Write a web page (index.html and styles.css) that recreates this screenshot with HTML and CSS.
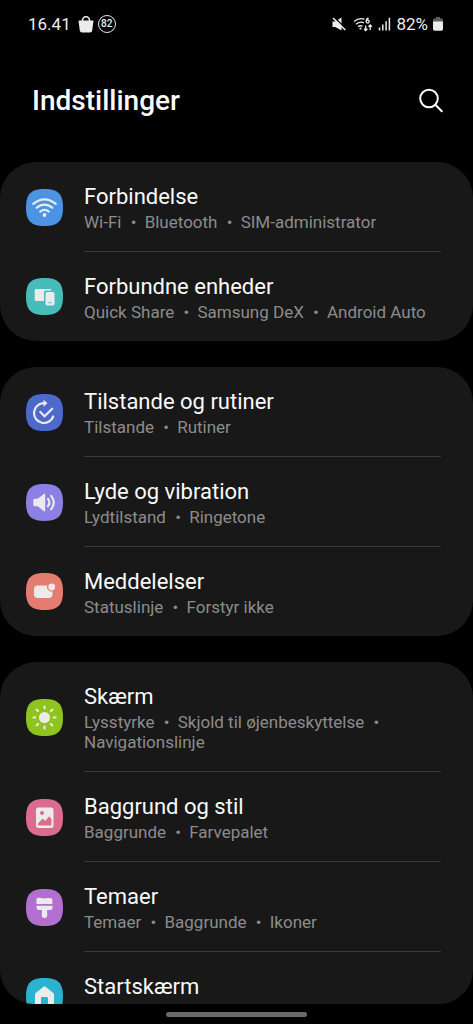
FILE: index.html
```html
<!DOCTYPE html>
<html lang="da">
<head>
<meta charset="utf-8">
<meta name="viewport" content="width=device-width, initial-scale=1">
<title>Indstillinger</title>
<link rel="stylesheet" href="styles.css">
</head>
<body>
<div class="screen">
  <div class="status">
    <div class="status-left">
      <span class="clock">16.41</span>
      <svg class="bag" viewBox="0 0 16 17" width="16" height="17" aria-hidden="true"><path d="M4.500 6V4.200a3.400 3.400 0 0 1 7 0V6" fill="none" stroke="#ececec" stroke-width="1.600"/><path d="M1.300 4.500h13.400q.8 0 .7.800l-1.200 9.300q-.3 2-2.200 2H4q-1.900 0-2.200-2L.6 5.300q-.1-.8.7-.8z" fill="#ececec"/></svg>
      <span class="level">82</span>
    </div>
    <div class="status-right">
      <svg viewBox="0 0 14 14" width="14" height="14" aria-hidden="true"><path d="M.5 4.500h2.800L9.500.5v13L3.300 10H.5z" fill="#ececec"/><path d="M2.300.300l12 12" stroke="#000" stroke-width="1.500"/><path d="M1 1l12.300 12" stroke="#ececec" stroke-width="1.600"/></svg>
      <svg class="net" viewBox="0 0 20 15" width="20" height="15" aria-hidden="true"><g fill="none" stroke="#ececec" stroke-width="1.300"><path d="M1 4.500Q6 .2 11.500 2.200M3 7.300Q7 4 11 5.800M5 9.700q2.300-1.700 4.600-.4"/><path d="M15.500.8q-2.500 1.300-2.200 3.400"/><circle cx="14.700" cy="4.500" r="1.500"/><path d="M12.700 8.500v5M11 11.800l1.700 1.700 1.700-1.700M17.200 13V8M15.500 9.700L17.200 8l1.700 1.700"/></g><circle cx="7.500" cy="11.500" r="1.100" fill="#ececec"/></svg>
      <svg viewBox="0 0 13 14" width="13" height="14" aria-hidden="true"><path d="M1.500 13.500v-3M4.800 13.500v-6M8.100 13.500V4.200M11.400 13.500V.8" stroke="#ececec" stroke-width="1.500"/></svg>
      <span class="percent">82%</span>
      <svg viewBox="0 0 10 14" width="10" height="14" aria-hidden="true"><path d="M3 0h4v1.500h1.500q1.500 0 1.500 1.500v2H0V3q0-1.500 1.500-1.500H3z" fill="#606060"/><path d="M0 4.500h10V12q0 1.700-1.700 1.700H1.700Q0 13.700 0 12z" fill="#ececec"/></svg>
    </div>
  </div>

  <header class="header">
    <h1>Indstillinger</h1>
    <button class="search" type="button" aria-label="Søg">
      <svg viewBox="0 0 26 26" width="26" height="26" aria-hidden="true"><g fill="none" stroke="#fafafa" stroke-width="2"><circle cx="11" cy="10.500" r="8.800"/><path d="M17.300 16.800l6.500 6.500" stroke-linecap="round"/></g></svg>
    </button>
  </header>

  <main class="list">
    <section class="card">
      <a class="row" href="#forbindelse">
        <svg class="icon blue" viewBox="0 0 37 37"><path class="tile" d="M18.500 0C32 0 37 5 37 18.500S32 37 18.500 37 0 32 0 18.500 5 0 18.500 0z"/><g class="line"><path d="M7.200 14.800Q18.500 5.800 29.800 14.800M10.700 18.700q7.800-6.200 15.600 0M14.200 22.600q4.300-3.500 8.600 0"/></g><circle class="fill" cx="18.500" cy="26" r="1.900"/></svg>
        <span class="body"><span class="name">Forbindelse</span><span class="detail">Wi-Fi <i>•</i> Bluetooth <i>•</i> SIM-administrator</span></span>
      </a>
      <a class="row" href="#enheder">
        <svg class="icon teal" viewBox="0 0 37 37"><path class="tile" d="M18.500 0C32 0 37 5 37 18.500S32 37 18.500 37 0 32 0 18.500 5 0 18.500 0z"/><path class="fill" d="M10 11h14q1.300 0 1.300 1.500H20q-2 0-2 2V23h-8q-1.300 0-1.300-1.300v-9.400Q8.700 11 10 11z"/><rect class="fill" x="19.500" y="14" width="9" height="13.500" rx="1.700"/><path class="cut" d="M22.300 24.800h3.400" stroke-width="1"/></svg>
        <span class="body"><span class="name">Forbundne enheder</span><span class="detail">Quick Share <i>•</i> Samsung DeX <i>•</i> Android Auto</span></span>
      </a>
    </section>

    <section class="card">
      <a class="row" href="#tilstande">
        <svg class="icon indigo" viewBox="0 0 37 37"><path class="tile" d="M18.500 0C32 0 37 5 37 18.500S32 37 18.500 37 0 32 0 18.500 5 0 18.500 0z"/><g class="line"><path d="M19 9.200h-1.700A9.900 9.900 0 1 0 27.200 22.500"/><path d="M14.300 18l4.300 4.300 7.600-7.600" stroke-linecap="round"/></g><path class="fill" d="M17.500 5.800l4 3.400-4 3.600z"/></svg>
        <span class="body"><span class="name">Tilstande og rutiner</span><span class="detail">Tilstande <i>•</i> Rutiner</span></span>
      </a>
      <a class="row" href="#lyde">
        <svg class="icon violet" viewBox="0 0 37 37"><path class="tile" d="M18.500 0C32 0 37 5 37 18.500S32 37 18.500 37 0 32 0 18.500 5 0 18.500 0z"/><path class="fill" d="M8.700 14.700h3l6-4.800q1.500-1 1.500.8v15.600q0 1.800-1.500.8l-6-4.800h-3q-1.400 0-1.400-1.400v-4.800q0-1.400 1.400-1.400z"/><path class="line" d="M22 14.800q2.800 3.700 0 7.400M25.200 11.800q5.200 6.700 0 13.400"/></svg>
        <span class="body"><span class="name">Lyde og vibration</span><span class="detail">Lydtilstand <i>•</i> Ringetone</span></span>
      </a>
      <a class="row" href="#meddelelser">
        <svg class="icon coral" viewBox="0 0 37 37"><path class="tile" d="M18.500 0C32 0 37 5 37 18.500S32 37 18.500 37 0 32 0 18.500 5 0 18.500 0z"/><rect class="fill" x="8" y="12.500" width="18.500" height="12.500" rx="3.700"/><circle class="cut tilefill" cx="25.700" cy="14" r="4" stroke-width="1.500"/><circle class="fill" cx="25.700" cy="14" r="3.400"/></svg>
        <span class="body"><span class="name">Meddelelser</span><span class="detail">Statuslinje <i>•</i> Forstyr ikke</span></span>
      </a>
    </section>

    <section class="card">
      <a class="row" href="#skaerm">
        <svg class="icon green" viewBox="0 0 37 37"><path class="tile" d="M18.500 0C32 0 37 5 37 18.500S32 37 18.500 37 0 32 0 18.500 5 0 18.500 0z"/><circle class="fill" cx="18.500" cy="18.500" r="5.500"/><g class="line"><path d="M18.500 7.500v1.800M18.500 27.700v1.800M7.500 18.500h1.800M27.700 18.500h1.800M10.700 10.700l1.300 1.300M25 25l1.300 1.300M10.700 26.300L12 25M25 12l1.300-1.300"/></g></svg>
        <span class="body"><span class="name">Skærm</span><span class="detail">Lysstyrke <i>•</i> Skjold til øjenbeskyttelse <i>•</i> Navigationslinje</span></span>
      </a>
      <a class="row" href="#baggrund">
        <svg class="icon pink" viewBox="0 0 37 37"><path class="tile" d="M18.500 0C32 0 37 5 37 18.500S32 37 18.500 37 0 32 0 18.500 5 0 18.500 0z"/><rect class="fill" x="10" y="8.500" width="17.500" height="20.500" rx="2.500"/><circle class="tilefill" cx="16" cy="14" r="2"/><path class="tilefill" d="M12 24.500l4-4.300q.8-.7 1.600.1l1.700 1.700 3.200-4q.8-.9 1.500.1l1.500 2.400v4.700q0 1.300-1.300 1.300H13.300q-1.300 0-1.300-1.300z"/></svg>
        <span class="body"><span class="name">Baggrund og stil</span><span class="detail">Baggrunde <i>•</i> Farvepalet</span></span>
      </a>
      <a class="row" href="#temaer">
        <svg class="icon purple" viewBox="0 0 37 37"><path class="tile" d="M18.500 0C32 0 37 5 37 18.500S32 37 18.500 37 0 32 0 18.500 5 0 18.500 0z"/><path class="fill" d="M10.500 9.300q2.500-.8 5-.2 3 .9 6 0 2.500-.6 4.800.7V15H10.500zM10.500 16.700h16v2q0 2.300-2.300 2.300h-2.500q-.8 0-.7 1l.3 3.500q.2 3.500-2.800 3.500t-2.800-3.500l.3-3.500q.1-1-.7-1h-2.500q-2.300 0-2.300-2.300z"/></svg>
        <span class="body"><span class="name">Temaer</span><span class="detail">Temaer <i>•</i> Baggrunde <i>•</i> Ikoner</span></span>
      </a>
      <a class="row" href="#startskaerm">
        <svg class="icon cyan" viewBox="0 0 37 37"><path class="tile" d="M18.500 0C32 0 37 5 37 18.500S32 37 18.500 37 0 32 0 18.500 5 0 18.500 0z"/><path class="fill" d="M17.500 8.700q1-.8 2 0l7.800 6.200q.7.600.7 1.500v9q0 2-2 2h-4v-7q0-1.300-1.300-1.300h-4.400q-1.300 0-1.300 1.300v7H11q-2 0-2-2v-9q0-.9.700-1.500z"/></svg>
        <span class="body"><span class="name">Startskærm</span></span>
      </a>
    </section>
  </main>

  <div class="gesture"><span class="handle"></span></div>
</div>
</body>
</html>
```

FILE: styles.css
```css
* { box-sizing: border-box; }

body {
  margin: 0;
  background: #000;
  color: #fafafa;
  font-family: Roboto, "Noto Sans", sans-serif;
}

.screen {
  display: flex;
  flex-direction: column;
  height: 100vh;
}

.status {
  display: flex;
  justify-content: space-between;
  align-items: center;
  padding: 12px 30px 0 28px;
  color: #ececec;
  font-size: 17px;
  line-height: 24px;
}

.status-left,
.status-right {
  display: flex;
  align-items: center;
}

.status-left { gap: 4px; }
.status-right { gap: 5px; }
.clock { margin-right: 3px; }
.net { margin-left: 2px; }

.level {
  display: grid;
  place-items: center;
  width: 18px;
  height: 18px;
  border: 1px solid #ececec;
  border-radius: 50%;
  font-size: 10px;
  font-weight: 500;
  line-height: 10px;
}

.header {
  display: flex;
  justify-content: space-between;
  align-items: center;
  padding: 40px 29px 37px 32px;
}

h1 {
  margin: 0;
  font-size: 28px;
  font-weight: 500;
  line-height: 49px;
}

.search {
  display: flex;
  padding: 0;
  border: 0;
  background: none;
}

.list {
  display: flex;
  flex: 1;
  flex-direction: column;
  gap: 26px;
  min-height: 0;
  overflow-y: auto;
  scrollbar-width: none;
  border-radius: 0 0 34px 34px;
}

.card {
  flex-shrink: 0;
  padding: 0 32px 0 26px;
  border-radius: 36px;
  background: #181818;
}

.row {
  display: flex;
  align-items: center;
  gap: 21px;
  color: inherit;
  text-decoration: none;
}

.body {
  display: flex;
  flex: 1;
  flex-direction: column;
  min-height: 89px;
  padding: 19px 0;
}

.row:not(:last-child) .body { border-bottom: 1px solid #3a3a3a; }

.name {
  font-size: 22px;
  line-height: 31px;
}

.detail {
  color: #8c8c8c;
  font-size: 17px;
  line-height: 20px;
}

.detail i {
  margin: 0 4px 0 5px;
  font-style: normal;
}

.icon {
  flex: none;
  width: 37px;
  height: 37px;
}

.tile, .tilefill { fill: var(--tile); }
.fill { fill: #ebebeb; }
.line { fill: none; stroke: #ebebeb; stroke-width: 2.2; stroke-linecap: round; }
.cut { stroke: var(--tile); }

.blue { --tile: #4b93e3; }
.teal { --tile: #46bdb9; }
.indigo { --tile: #4d69cb; }
.violet { --tile: #8c80e4; }
.coral { --tile: #e47d70; }
.green { --tile: #8fc31f; }
.pink { --tile: #dc6b90; }
.purple { --tile: #b36fcf; }
.cyan { --tile: #2bb2cf; }

.gesture {
  display: flex;
  flex: none;
  justify-content: center;
  align-items: center;
  height: 20px;
}

.handle {
  width: 30%;
  height: 5px;
  border-radius: 3px;
  background: #6a6a6a;
}
```
